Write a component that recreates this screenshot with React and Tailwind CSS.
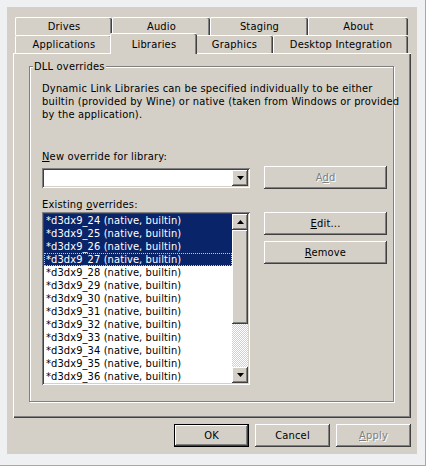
import React from 'react';

const raised =
  'shadow-[inset_-1px_-1px_#404040,inset_1px_1px_#ffffff,inset_-2px_-2px_#808080,inset_2px_2px_#d4d0c8]';
const sunken =
  'shadow-[inset_1px_1px_#808080,inset_-1px_-1px_#ffffff,inset_2px_2px_#404040,inset_-2px_-2px_#d4d0c8]';

const Arrow = ({ up }) => (
  <svg width="7" height="4" viewBox="0 0 7 4">
    <polygon points={up ? '0,4 7,4 3.5,0' : '0,0 7,0 3.5,4'} fill="#000" />
  </svg>
);

const Tab = ({ label, w, selected }) =>
  selected ? (
    <div
      className={`relative z-10 -mx-[2px] -mt-[2px] -mb-px h-[21px] ${w} flex items-start justify-center pt-[4px] bg-[#d4d0c8] rounded-tl-[2px] rounded-tr-[2px] border-l border-t border-white shadow-[inset_-1px_0_#404040,inset_-2px_0_#808080]`}
    >
      {label}
    </div>
  ) : (
    <div
      className={`h-[18px] ${w} flex items-center justify-center bg-[#d4d0c8] rounded-tl-[2px] rounded-tr-[2px] border-l border-t border-white shadow-[inset_-1px_0_#404040,inset_-2px_0_#808080]`}
    >
      {label}
    </div>
  );

const Button = ({ children, w = 'w-[123px]', disabled, isDefault }) => (
  <div
    className={`${w} h-[23px] flex items-center justify-center bg-[#d4d0c8] ${
      isDefault ? 'border border-black' : ''
    }`}
  >
    <div
      className={`w-full h-full flex items-center justify-center ${raised} ${
        disabled ? 'text-[#808080] [text-shadow:1px_1px_0_#ffffff]' : 'text-black'
      }`}
    >
      {children}
    </div>
  </div>
);

const items = [24, 25, 26, 27, 28, 29, 30, 31, 32, 33, 34, 35, 36];

export default function App() {
  return (
    <div
      className="w-[426px] h-[466px] bg-[#eef0f2] border-b border-r border-[#a8a8a8] pl-[7px] pt-[7px] text-[11px] leading-[13px] tracking-[0.2px] whitespace-nowrap text-black"
      style={{ fontFamily: '"DejaVu Sans Condensed", "Liberation Sans", Arial, sans-serif' }}
    >
      <div className="w-[410px] h-[447px] bg-[#d4d0c8] pl-[6px] pt-[10px] flex flex-col">
        {/* Tabs */}
        <div className="ml-[2px] w-[393px] flex flex-col">
          <div className="flex">
            <Tab label="Drives" w="w-[97px]" />
            <Tab label="Audio" w="w-[98px]" />
            <Tab label="Staging" w="w-[98px]" />
            <Tab label="About" w="w-[100px]" />
          </div>
          <div className="flex">
            <Tab label="Applications" w="w-[97px]" />
            <Tab label="Libraries" w="w-[87px]" selected />
            <Tab label="Graphics" w="w-[78px]" />
            <Tab label="Desktop Integration" w="w-[135px]" />
          </div>
        </div>

        {/* Tab page */}
        <div className="w-[398px] h-[365px] pl-[16px] pt-[13px] shadow-[inset_1px_1px_#ffffff,inset_-1px_-1px_#404040,inset_-2px_-2px_#808080]">
          <div className="relative w-[365px] h-[336px] border border-[#808080] shadow-[inset_1px_1px_#ffffff,1px_1px_0_#ffffff] pl-[12px] pt-[15px]">
            <span className="absolute left-[3px] -top-[7px] bg-[#d4d0c8] px-[1px]">DLL overrides</span>

            <p>
              <span className="block">Dynamic Link Libraries can be specified individually to be either</span>
              <span className="block">builtin (provided by Wine) or native (taken from Windows or provided</span>
              <span className="block">by the application).</span>
            </p>

            <div className="mt-[29px]">
              <span className="underline">N</span>ew override for library:
            </div>

            <div className="mt-[3px] flex items-center gap-[14px]">
              <div className={`w-[208px] h-[20px] p-[2px] bg-white ${sunken}`}>
                <div className="h-full flex justify-end">
                  <div className={`w-[16px] h-[16px] bg-[#d4d0c8] flex items-center justify-center ${raised}`}>
                    <Arrow />
                  </div>
                </div>
              </div>
              <Button w="w-[123px]" disabled>
                <span>
                  A<span className="underline">d</span>d
                </span>
              </Button>
            </div>

            <div className="mt-[9px]">
              Existing <span className="underline">o</span>verrides:
            </div>

            <div className="mt-[1px] flex items-start gap-[14px]">
              <div className={`w-[208px] h-[173px] p-[2px] bg-white flex ${sunken}`}>
                <div className="flex-1 flex flex-col tracking-[0.1px]">
                  {items.map((n, i) => {
                    const sel = i < 4;
                    const focus = i === 3;
                    return (
                      <div
                        key={n}
                        className={`h-[13px] pl-[2px] ${
                          sel ? 'bg-[#0a246a] text-white' : 'text-black'
                        } ${focus ? 'outline outline-1 outline-dotted outline-[#e8c860] -outline-offset-1' : ''}`}
                      >
                        *d3dx9_{n} (native, builtin)
                      </div>
                    );
                  })}
                </div>
                <div className="w-[16px] flex flex-col">
                  <div className={`h-[16px] bg-[#d4d0c8] flex items-center justify-center ${raised}`}>
                    <Arrow up />
                  </div>
                  <div className={`h-[94px] bg-[#d4d0c8] ${raised}`} />
                  <div className="flex-1 bg-[repeating-conic-gradient(#d4d0c8_0_25%,#ffffff_0_50%)] bg-[length:2px_2px]" />
                  <div className={`h-[16px] bg-[#d4d0c8] flex items-center justify-center ${raised}`}>
                    <Arrow />
                  </div>
                </div>
              </div>
              <div className="flex flex-col gap-[6px]">
                <Button>
                  <span>
                    <span className="underline">E</span>dit...
                  </span>
                </Button>
                <Button>
                  <span>
                    <span className="underline">R</span>emove
                  </span>
                </Button>
              </div>
            </div>
          </div>
        </div>

        {/* Dialog buttons */}
        <div className="mt-[6px] pr-[6px] flex justify-end gap-[6px]">
          <Button w="w-[75px]" isDefault>
            OK
          </Button>
          <Button w="w-[75px]">Cancel</Button>
          <Button w="w-[75px]" disabled>
            <span>
              <span className="underline">A</span>pply
            </span>
          </Button>
        </div>
      </div>
    </div>
  );
}
